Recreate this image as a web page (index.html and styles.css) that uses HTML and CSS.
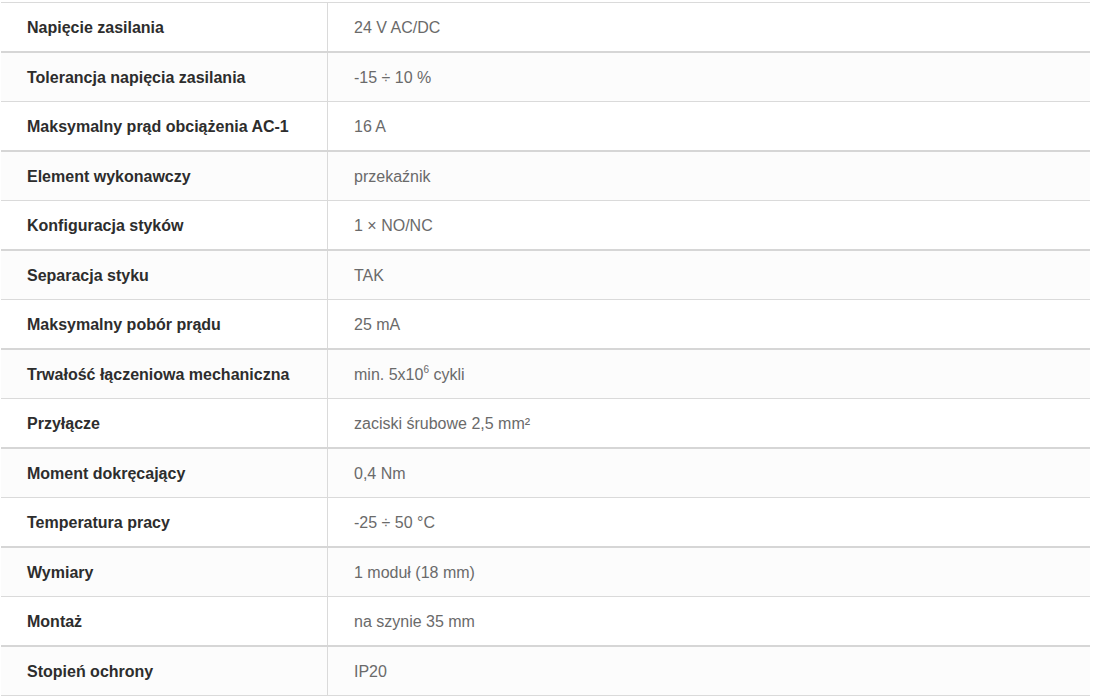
FILE: index.html
```html
<!DOCTYPE html>
<html lang="pl">
<head>
<meta charset="utf-8">
<title>Dane techniczne</title>
<link rel="stylesheet" href="styles.css">
</head>
<body>
<div class="specs">
  <div class="row"><div class="label">Napięcie zasilania</div><div class="value">24 V AC/DC</div></div>
  <div class="row"><div class="label">Tolerancja napięcia zasilania</div><div class="value">-15 ÷ 10 %</div></div>
  <div class="row"><div class="label">Maksymalny prąd obciążenia AC-1</div><div class="value">16 A</div></div>
  <div class="row"><div class="label">Element wykonawczy</div><div class="value">przekaźnik</div></div>
  <div class="row"><div class="label">Konfiguracja styków</div><div class="value">1 × NO/NC</div></div>
  <div class="row"><div class="label">Separacja styku</div><div class="value">TAK</div></div>
  <div class="row"><div class="label">Maksymalny pobór prądu</div><div class="value">25 mA</div></div>
  <div class="row"><div class="label">Trwałość łączeniowa mechaniczna</div><div class="value"><span>min. 5x10<sup class="sup">6</sup> cykli</span></div></div>
  <div class="row"><div class="label">Przyłącze</div><div class="value">zaciski śrubowe 2,5 mm²</div></div>
  <div class="row"><div class="label">Moment dokręcający</div><div class="value">0,4 Nm</div></div>
  <div class="row"><div class="label">Temperatura pracy</div><div class="value">-25 ÷ 50 °C</div></div>
  <div class="row"><div class="label">Wymiary</div><div class="value">1 moduł (18 mm)</div></div>
  <div class="row"><div class="label">Montaż</div><div class="value">na szynie 35 mm</div></div>
  <div class="row"><div class="label">Stopień ochrony</div><div class="value">IP20</div></div>
</div>
</body>
</html>
```
FILE: styles.css
```css
html, body {
  margin: 0;
  padding: 0;
  background: #ffffff;
}
body {
  padding: 2px 3px 0 1px;
  font-family: "Liberation Sans", Arial, sans-serif;
  font-size: 16px;
}
.specs {
  width: 1089px;
  border-top: 1px solid #dadada;
}
.row {
  display: grid;
  grid-template-columns: 326px 1fr;
  height: 48px;
  border-bottom: 2px solid #d6d6d6;
  background: #ffffff;
}
.row:nth-child(even) {
  background: #fcfcfc;
  border-bottom: 1px solid #dadada;
}
.label,
.value {
  display: flex;
  align-items: center;
  padding-left: 26px;
  padding-top: 2px;
  line-height: 20px;
}
.label {
  font-weight: bold;
  color: #2d2d2d;
}
.value {
  color: #6a6a6a;
  border-left: 1px solid #dadada;
}
.sup {
  font-size: 10px;
  line-height: 0;
  position: relative;
  top: -1px;
  vertical-align: super;
}
```
